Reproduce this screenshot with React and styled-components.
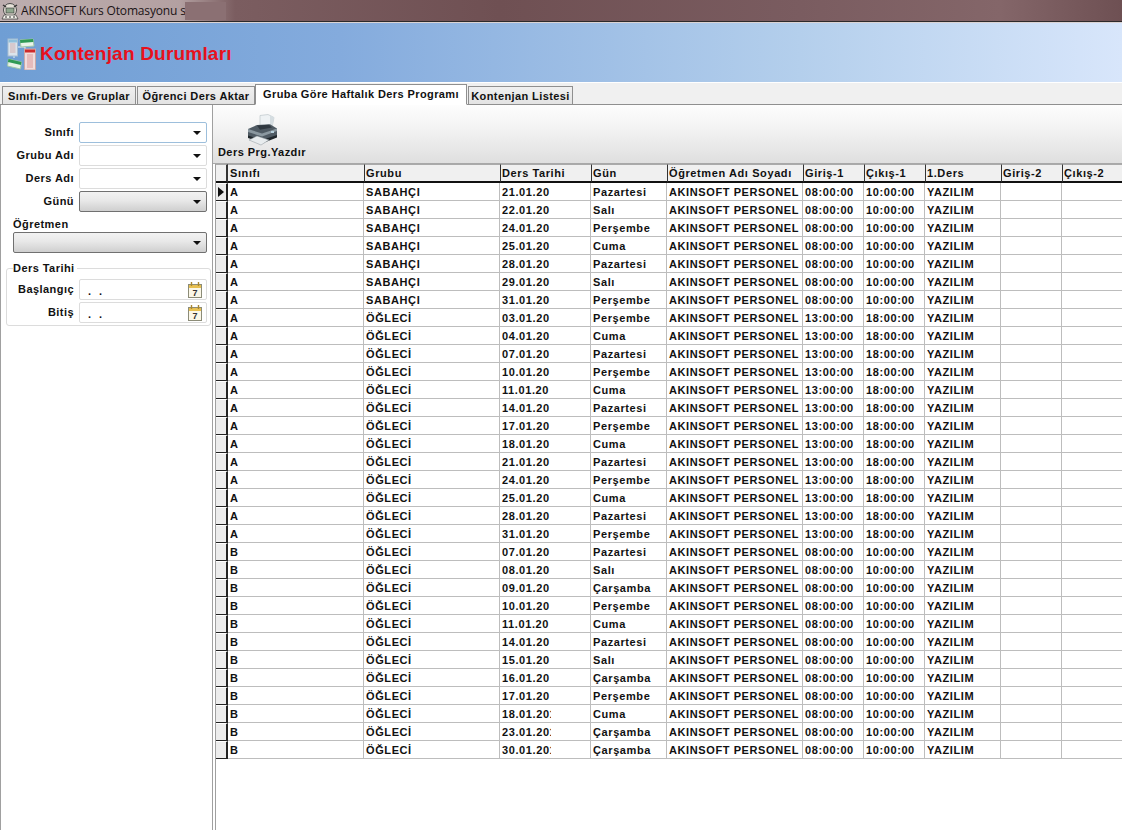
import React from 'react';
import styled, { createGlobalStyle } from 'styled-components';

const Global = createGlobalStyle`
  html, body { margin: 0; padding: 0; background: #fff; overflow: hidden; }
  * { box-sizing: border-box; }
  body { font-family: "Liberation Sans", Arial, sans-serif; }
`;
const Page = styled.div`width: 1122px; height: 830px; display: flex; flex-direction: column; overflow: hidden; background: #fff;`;
const TitleBar = styled.div`
  height: 22px; flex: none; display: flex; align-items: center; gap: 2px; padding-left: 1px;
  border-bottom: 1px solid #2d2a2c;
  background: linear-gradient(90deg, #bdaeaf 0, #b3a0a1 180px, #7b5d60 235px, #6f5053 500px, #7a5c60 800px, #846669 1000px, #6e5053 1122px);
`;
const TitleText = styled.span`font: 12px "Open Sans", "Liberation Sans", sans-serif; letter-spacing: -.15px; color: #1b1416; white-space: nowrap; width: 164px; overflow: hidden;`;
const Blur = styled.span`width: 41px; height: 18px; margin-left: -2px; background: #8b7073;`;
const Banner = styled.div`
  height: 60px; flex: none; display: flex; align-items: center; padding: 2px 0 0 7px; gap: 4px;
  border-top: 1px solid #dbd3d3;
  background: linear-gradient(90deg, #6f9ed4 0, #84abdd 340px, #b4cfec 800px, #d8e6fb 1122px);
`;
const BannerTitle = styled.h1`margin: 0; font: bold 19px "Liberation Sans", Arial, sans-serif; letter-spacing: .2px; color: #e8101c;`;
const TabStrip = styled.div`
  height: 23px; flex: none; display: flex; align-items: flex-end; padding-left: 2px; gap: 1px;
  background: #f0f0f0; border-bottom: 1px solid #8f8f8f; border-top: 1px solid #fff;
`;
const Tab = styled.div`
  width: ${p => p.$w}px; flex: none; height: ${p => p.$active ? 21 : 18}px;
  margin-left: ${p => p.$active ? '-1px' : 0}; margin-bottom: ${p => p.$active ? '-1px' : 0};
  padding-bottom: ${p => p.$active ? 2 : 0}px;
  display: flex; align-items: center; justify-content: center; font: bold 11px "Liberation Sans", Arial, sans-serif;
  letter-spacing: .4px; color: #111; white-space: nowrap;
  background: ${p => p.$active ? '#fff' : 'linear-gradient(#f0f0f0, #e3e3e3)'};
  border: 1px solid #8f8f8f; border-bottom: ${p => p.$active ? '1px solid #fff' : 'none'};
`;
const Body = styled.div`flex: 1; display: flex; min-height: 0;`;
const Side = styled.aside`
  width: 213px; flex: none; border-right: 1px solid #a0a0a0; padding: 17px 5px 0 4px; background: #fff;
  display: flex; flex-direction: column; border-left: 1px solid #a0a0a0;
`;
const Field = styled.div`display: flex; align-items: center; height: 21px; margin-bottom: 2px; margin-top: ${p => p.$top || 0}px;`;
const Label = styled.label`
  width: ${p => p.$w || 69}px; flex: none; text-align: right; margin-right: 5px; padding-bottom: 2px;
  font: bold 11px "Liberation Sans", Arial, sans-serif; letter-spacing: .45px; color: #111;
`;
const Combo = styled.div`
  flex: 1; height: 21px; display: flex; align-items: center; justify-content: flex-end; padding-right: 4px;
  border-radius: 2px;
  border: 1px solid ${p => p.$gray ? '#707070' : p.$focus ? '#9dbfdc' : '#dcdcdc'};
  background: ${p => p.$gray ? 'linear-gradient(#f2f2f2, #e8e8e8 45%, #cfcfcf)' : '#fff'};
`;
const Arrow = styled.i`width: 0; height: 0; border: 4px solid transparent; border-top: 4px solid #111; border-bottom: 0; margin-right: 1px;`;
const WideLabel = styled.div`font: bold 11px "Liberation Sans", Arial, sans-serif; letter-spacing: .45px; color: #111; margin: 3px 0 1px 8px; height: 14px; line-height: 14px;`;
const ComboWrap = styled.div`display: flex; padding-left: 8px; margin-bottom: 9px;`;
const Group = styled.fieldset`
  margin: 0 -4px 0 1px; padding: 0 3px 0 0; border: 1px solid #dcdcdc; border-radius: 3px; min-width: 0;
`;
const Legend = styled.legend`margin-left: 6px; padding: 0 2px 0 0; font: bold 11px "Liberation Sans", Arial, sans-serif; letter-spacing: .45px; color: #111; line-height: 13px;`;
const DateBox = styled.div`
  flex: 1; height: 21px; display: flex; align-items: center; justify-content: space-between; padding: 0 4px 0 8px;
  border: 1px solid #dcdcdc; border-radius: 2px; font: bold 11px "Liberation Sans", Arial, sans-serif; letter-spacing: 8px; color: #111;
`;
const Dots = styled.span`position: relative; top: 1px;`;
const Main = styled.main`flex: 1; min-width: 0; display: flex; flex-direction: column;`;
const Toolbar = styled.div`
  height: 59px; flex: none; background: linear-gradient(#fdfdfd, #f3f3f3 40%, #dfdfdf); border-bottom: 1px solid #a8a8a8;
  padding: 9px 0 0 3px;
`;
const ToolBtn = styled.div`
  width: 92px; display: flex; flex-direction: column; align-items: center;
  font: bold 11px "Liberation Sans", Arial, sans-serif; line-height: 13px; letter-spacing: .45px; color: #111;
`;
const GridWrap = styled.div`flex: 1; margin-left: 2px; border-left: 1px solid #a0a0a0; background: #fff; overflow: hidden;`;
const Table = styled.table`border-collapse: separate; border-spacing: 0; table-layout: fixed; width: 906px;
  font: bold 11px "Liberation Sans", Arial, sans-serif; letter-spacing: .6px; color: #111;`;
const Th = styled.th`
  height: 19px; padding: 0 0 1px 1px; text-align: left; font-weight: bold; white-space: nowrap; overflow: hidden;
  background: #f0f0f0; border-bottom: 2px solid #111; border-left: 1px solid #333; border-top: 1px solid #aaa;
`;
const FirstTh = styled(Th)`border-left: 0; padding-left: 2px;`;
const CornerTh = styled(Th)`border-left: 0; padding: 0; border-right: 2px solid #333;`;
const Indicator = styled.td`
  padding: 0; height: 18px; background: #ececec; border-right: 2px solid #222; border-bottom: 1px solid #222;
  border-top: 1px solid #fff; text-align: center; line-height: 0;
`;
const Td = styled.td`
  height: 18px; padding: 0 0 0 2px; white-space: nowrap; overflow: hidden; line-height: 16px;
  border-right: 1px solid #bdbdbd; border-bottom: 1px solid #bdbdbd;
`;
const DateClip = styled.span`display: block; width: 49px; overflow: hidden;`;

const Caret = () => <svg width="7" height="10" viewBox="0 0 7 10"><path d="M0 0l6 5-6 5z" fill="#111"/></svg>;
const Cal = () => (
  <svg width="14" height="16" viewBox="0 0 14 16" style={{ letterSpacing: 0 }}>
    <rect x=".5" y="2.5" width="13" height="13" fill="#fbf7e8" stroke="#8c8c78"/>
    <rect x="1" y="3" width="12" height="3" fill="#e8c050"/>
    <path d="M3.5 0v4M10.5 0v4" stroke="#a8862e" strokeWidth="1.4"/>
    <text x="7" y="14" textAnchor="middle" fontSize="9" fontWeight="bold" fontFamily="Liberation Sans" fill="#333">7</text>
  </svg>
);
const Printer = () => (
  <svg width="32" height="32" viewBox="0 0 32 32">
    <path d="M14 1.5l8-1 6 3-2 10-12 1z" fill="#eef2f4" stroke="#b5bfc5" strokeWidth=".6"/>
    <path d="M24 1l4 2.5-2 10-2-.5z" fill="#d5dde1"/>
    <path d="M2 15l9-4 13-.8 7 4.3v7.5L17 27 2 22.500z" fill="#4f5a63"/>
    <path d="M2 15l14 4.500 15-5v2.500L16 22.500 2 18z" fill="#8b98a0"/>
    <path d="M2 21.500l14 4.500 15-5v2.500L17 29 2 24z" fill="#20272c"/>
    <path d="M11 11.500l12-.8 3 2.800-12 2.200z" fill="#2f3840"/>
    <path d="M3 26l8-4 12 4-8 5z" fill="#e8ecee" stroke="#8d979c" strokeWidth=".5"/>
    <path d="M25 17h3v2h-3z" fill="#b7d0dd"/>
  </svg>
);
const BannerIcon = () => (
  <svg width="29" height="33" viewBox="0 0 29 33">
    <path d="M11 10h7v3M7 18v3" stroke="#eef4fa" fill="none"/>
    <rect x="1" y="2" width="9.500" height="17" fill="#dbe4ec" stroke="#a8bdd2"/>
    <rect x="1.500" y="2.500" width="8.500" height="3" fill="#8fc0dc"/>
    <path d="M3 7h5.500M3 9h5.500M3 11h5.500M3 13h5.500M3 15h5.500" stroke="#d3aeae"/>
    <path d="M13 3l13-1 1 7-13 1z" fill="#e9f4e9" stroke="#a2c7aa"/>
    <path d="M13 3l13-1 .4 3-13 1z" fill="#2f9a55"/>
    <path d="M1.500 22l13 3-1 7-13-3z" fill="#e8f3e8" stroke="#a2c7aa"/>
    <path d="M1.500 22l13 3-.6 3-13-3z" fill="#2f9a55"/>
    <rect x="17.500" y="12" width="11" height="21" fill="#f0dcdc" stroke="#c9a8a8"/>
    <rect x="18" y="12.500" width="10" height="3" fill="#cf2a2a"/>
    <path d="M20 18h6M20 20h6M20 22h6M20 24h6M20 26h6M20 28h6M20 30h6" stroke="#dc9a9a"/>
  </svg>
);
const AppIcon = () => (
  <svg width="18" height="18" viewBox="0 0 18 18">
    <circle cx="9" cy="8" r="6.500" fill="#e6e2d8" stroke="#4a4a4a"/>
    <path d="M2 3l3 2M16 3l-3 2" stroke="#333" strokeWidth="1.500"/>
    <rect x="5" y="6" width="8" height="5" fill="#8fa68d" stroke="#333" strokeWidth=".6"/>
    <path d="M1 17l2-4h12l2 4z" fill="#f3f1ea" stroke="#333" strokeWidth=".7"/>
    <path d="M4 15h2M8 15h2M12 15h2" stroke="#333"/>
  </svg>
);

const cols = [
  ['Grubu', 136], ['Ders Tarihi', 91], ['Gün', 76], ['Öğretmen Adı Soyadı', 136],
  ['Giriş-1', 61], ['Çıkış-1', 61], ['1.Ders', 76], ['Giriş-2', 61], ['Çıkış-2', 61],
];
const raw = `A|SABAHÇI|21.01.20|Pazartesi|08
A|SABAHÇI|22.01.20|Salı|08
A|SABAHÇI|24.01.20|Perşembe|08
A|SABAHÇI|25.01.20|Cuma|08
A|SABAHÇI|28.01.20|Pazartesi|08
A|SABAHÇI|29.01.20|Salı|08
A|SABAHÇI|31.01.20|Perşembe|08
A|ÖĞLECİ|03.01.20|Perşembe|13
A|ÖĞLECİ|04.01.20|Cuma|13
A|ÖĞLECİ|07.01.20|Pazartesi|13
A|ÖĞLECİ|10.01.20|Perşembe|13
A|ÖĞLECİ|11.01.20|Cuma|13
A|ÖĞLECİ|14.01.20|Pazartesi|13
A|ÖĞLECİ|17.01.20|Perşembe|13
A|ÖĞLECİ|18.01.20|Cuma|13
A|ÖĞLECİ|21.01.20|Pazartesi|13
A|ÖĞLECİ|24.01.20|Perşembe|13
A|ÖĞLECİ|25.01.20|Cuma|13
A|ÖĞLECİ|28.01.20|Pazartesi|13
A|ÖĞLECİ|31.01.20|Perşembe|13
B|ÖĞLECİ|07.01.20|Pazartesi|08
B|ÖĞLECİ|08.01.20|Salı|08
B|ÖĞLECİ|09.01.20|Çarşamba|08
B|ÖĞLECİ|10.01.20|Perşembe|08
B|ÖĞLECİ|11.01.20|Cuma|08
B|ÖĞLECİ|14.01.20|Pazartesi|08
B|ÖĞLECİ|15.01.20|Salı|08
B|ÖĞLECİ|16.01.20|Çarşamba|08
B|ÖĞLECİ|17.01.20|Perşembe|08
B|ÖĞLECİ|18.01.201|Cuma|08
B|ÖĞLECİ|23.01.201|Çarşamba|08
B|ÖĞLECİ|30.01.201|Çarşamba|08`;
const rows = raw.split('\n').map(l => l.split('|'));

export default function App() {
  return (
    <Page>
      <Global />
      <TitleBar><AppIcon /><TitleText>AKINSOFT Kurs Otomasyonu s1</TitleText><Blur /></TitleBar>
      <Banner><BannerIcon /><BannerTitle>Kontenjan Durumları</BannerTitle></Banner>
      <TabStrip>
        <Tab $w={134}>Sınıfı-Ders ve Gruplar</Tab>
        <Tab $w={118}>Öğrenci Ders Aktar</Tab>
        <Tab $w={212} $active>Gruba Göre Haftalık Ders Programı</Tab>
        <Tab $w={105}>Kontenjan Listesi</Tab>
      </TabStrip>
      <Body>
        <Side>
          <Field><Label>Sınıfı</Label><Combo $focus><Arrow /></Combo></Field>
          <Field><Label>Grubu Adı</Label><Combo><Arrow /></Combo></Field>
          <Field><Label>Ders Adı</Label><Combo><Arrow /></Combo></Field>
          <Field><Label>Günü</Label><Combo $gray><Arrow /></Combo></Field>
          <WideLabel>Öğretmen</WideLabel>
          <ComboWrap><Combo $gray><Arrow /></Combo></ComboWrap>
          <Group>
            <Legend>Ders Tarihi</Legend>
            <Field $top={4}><Label $w={67}>Başlangıç</Label><DateBox><Dots>..</Dots><Cal /></DateBox></Field>
            <Field><Label $w={67}>Bitiş</Label><DateBox><Dots>..</Dots><Cal /></DateBox></Field>
          </Group>
        </Side>
        <Main>
          <Toolbar><ToolBtn><Printer />Ders Prg.Yazdır</ToolBtn></Toolbar>
          <GridWrap>
            <Table>
              <colgroup>
                <col style={{ width: 12 }} />
                <col style={{ width: 136 }} />
                {cols.map(([n, w]) => <col key={n} style={{ width: w }} />)}
              </colgroup>
              <thead>
                <tr>
                  <CornerTh />
                  <FirstTh>Sınıfı</FirstTh>
                  {cols.map(([n]) => <Th key={n}>{n}</Th>)}
                </tr>
              </thead>
              <tbody>
                {rows.map((r, i) => (
                  <tr key={i}>
                    <Indicator>{i === 0 && <Caret />}</Indicator>
                    <Td>{r[0]}</Td><Td>{r[1]}</Td><Td><DateClip>{r[2]}</DateClip></Td><Td>{r[3]}</Td>
                    <Td>AKINSOFT PERSONEL</Td>
                    <Td>{r[4]}:00:00</Td>
                    <Td>{r[4] === '08' ? '10' : '18'}:00:00</Td>
                    <Td>YAZILIM</Td><Td /><Td />
                  </tr>
                ))}
              </tbody>
            </Table>
          </GridWrap>
        </Main>
      </Body>
    </Page>
  );
}
